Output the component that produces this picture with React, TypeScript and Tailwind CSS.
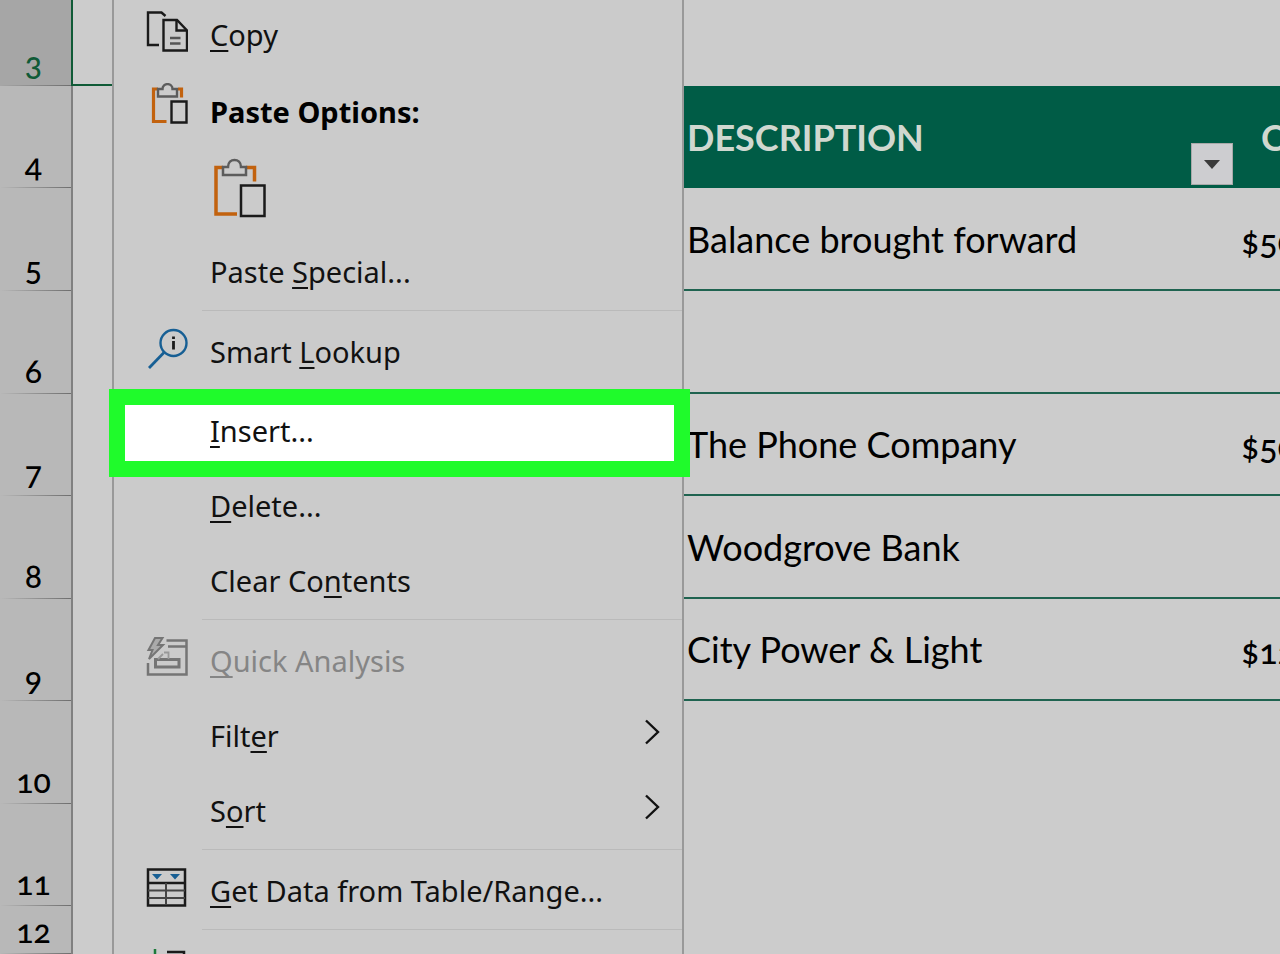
import React from "react";
import clsx from "clsx";

interface SheetRow {
  no: number;
  height: string;
  description?: string;
  amount?: string;
  line?: boolean;
}

const rows: SheetRow[] = [
  { no: 5, height: "h-[103px]", description: "Balance brought forward", amount: "$500.00", line: true },
  { no: 6, height: "h-[103px]", line: true },
  { no: 7, height: "h-[102px]", description: "The Phone Company", amount: "$500.00", line: true },
  { no: 8, height: "h-[103px]", description: "Woodgrove Bank", line: true },
  { no: 9, height: "h-[102px]", description: "City Power & Light", amount: "$125.00", line: true },
  { no: 10, height: "h-[103px]" },
  { no: 11, height: "h-[102px]" },
  { no: 12, height: "h-[48px]" },
  { no: 13, height: "h-[102px]" },
];

// ====== Icons ======
const CopyIcon = () => (
  <svg width="42" height="42" viewBox="0 0 42 42" fill="none" stroke="#1a1a1a" strokeWidth="2.400">
    <path d="M13 34H2V1.500H15.500L19.500 5" />
    <path d="M17.500 9H31L41 19.500V39.500H17.500Z" />
    <path d="M30.500 9V19.500H41" />
    <path d="M24 27H34.500M24 32.500H34.500" stroke="#555" />
  </svg>
);

const PasteIcon = () => (
  <svg width="42" height="42" viewBox="0 0 42 42" fill="none" strokeWidth="2.400">
    <path d="M20.500 38.500H7.500V6H12M32 6H35.500V14.500" stroke="#c2620e" strokeWidth="3.200" />
    <path d="M12 6H16.500C16.500 -0.500 26.500 -0.500 26.500 6H31V13.500H12Z" stroke="#5c5c5c" />
    <path d="M25.500 18.500H40.500V39.500H25.500Z" stroke="#1a1a1a" />
  </svg>
);

const PasteLargeIcon = () => (
  <svg width="54" height="60" viewBox="0 0 54 60" fill="none" strokeWidth="2.500">
    <path d="M24 56H3V9.500H10M33 9.500H41.500V23.500" stroke="#c2620e" strokeWidth="3.500" />
    <path d="M10 9H15C15 -0.500 28 -0.500 28 9H33V17H10Z" stroke="#5c5c5c" fill="#cbcbcb" />
    <path d="M28 27.500H51.500V58H28Z" stroke="#1a1a1a" />
  </svg>
);

const LookupIcon = () => (
  <svg width="42" height="42" viewBox="0 0 42 42" fill="none" stroke="#175f94" strokeWidth="2.400">
    <circle cx="27.500" cy="15" r="13" />
    <path d="M18 24.500L3 40" strokeWidth="2.800" />
    <path d="M27.500 13V21.500M27.500 8.500V11" stroke="#1a1a1a" strokeWidth="2.800" />
  </svg>
);

const QuickAnalysisIcon = () => (
  <svg width="42" height="42" viewBox="0 0 42 42" fill="none" stroke="#757575" strokeWidth="2.500">
    <path d="M20.500 3.500H40.500V37.500H2V26" />
    <path d="M22 9.500H40.500" />
    <path d="M9 1H16.500L12 8H17L3 22L6.500 13H2.500Z" strokeWidth="2" fill="#aaa" />
    <path d="M9.500 22.500H33V30H9.500Z" strokeWidth="3" />
    <path d="M18 15.500H22.500V22M12 22L17 17" stroke="#999" strokeWidth="1.800" />
  </svg>
);

const TableRangeIcon = () => (
  <svg width="42" height="42" viewBox="0 0 42 42" fill="none" stroke="#1a1a1a" strokeWidth="2">
    <path d="M2 2.500H39V38.500H2Z" strokeWidth="2.500" />
    <path d="M2 16H39" strokeWidth="2.500" />
    <path d="M20 16V38M2 23.500H39M2 31H39" stroke="#444" />
    <path d="M6 7H16L11 12.500ZM24 7H34L29 12.500Z" fill="#175f94" stroke="none" />
  </svg>
);

const NewCommentIcon = () => (
  <svg width="42" height="42" viewBox="0 0 42 42" fill="none" strokeWidth="2.500">
    <path d="M9 2V16M2 9H16" stroke="#1c7a3a" />
    <path d="M21 5H38V30H16L8 38V20" stroke="#1a1a1a" />
  </svg>
);

const SubmenuArrow = () => (
  <svg className="mr-[22px] mb-2 ml-auto" width="16" height="26" viewBox="0 0 16 26" fill="none" stroke="#111" strokeWidth="2.400">
    <path d="M2 1.500L14 13L2 24.500" />
  </svg>
);

// ====== Menu pieces ======
interface MenuItemProps {
  children?: React.ReactNode;
  icon?: React.ReactNode;
  height?: string;
  submenu?: boolean;
  disabled?: boolean;
  highlighted?: boolean;
}

const MenuItem = ({ children, icon, height = "h-[75px]", submenu, disabled, highlighted }: MenuItemProps) => (
  <button
    type="button"
    role="menuitem"
    disabled={disabled}
    className={clsx(
      "relative flex w-full shrink-0 items-center gap-[22px] pl-8 text-left text-[29px] leading-10 whitespace-nowrap",
      height,
      disabled ? "text-[#858585]" : "text-[#111]"
    )}
  >
    {highlighted && (
      <span className="absolute -top-[5px] -right-2 -bottom-[9px] -left-[5px] border-[16px] border-[#1ffb2b] bg-white" />
    )}
    <span className="relative w-[42px] shrink-0 pb-1.5">{icon}</span>
    <span className="relative">{children}</span>
    {submenu && <SubmenuArrow />}
  </button>
);

const Key = ({ children }: { children: string }) => (
  <span className="underline decoration-2 underline-offset-4 [text-decoration-skip-ink:none]">{children}</span>
);

const Separator = () => (
  <div role="separator" className="ml-[88px] h-[5px] shrink-0 pt-px">
    <div className="h-px bg-[#bababa]" />
  </div>
);

const ContextMenu = () => (
  <div
    role="menu"
    className="absolute top-0 left-[112px] flex w-[572px] flex-col border-x-2 border-[#999999] bg-[#cbcbcb] font-['Noto_Sans',sans-serif]"
  >
    <MenuItem icon={<CopyIcon />} height="h-[70px]">
      <Key>C</Key>opy
    </MenuItem>
    <div className="flex h-[80px] items-center gap-[22px] pt-1 pl-8 text-[29px] leading-10 font-bold text-black">
      <span className="w-[42px] pb-4">
        <PasteIcon />
      </span>
      Paste Options:
    </div>
    <div className="flex h-[84px] pt-2 pl-[99px]">
      <button type="button" aria-label="Paste" className="h-[60px]">
        <PasteLargeIcon />
      </button>
    </div>
    <MenuItem>
      Paste <Key>S</Key>pecial...
    </MenuItem>
    <Separator />
    <MenuItem icon={<LookupIcon />}>
      Smart <Key>L</Key>ookup
    </MenuItem>
    <Separator />
    <MenuItem highlighted height="h-[74px]">
      <Key>I</Key>nsert...
    </MenuItem>
    <MenuItem>
      <Key>D</Key>elete...
    </MenuItem>
    <MenuItem>
      Clear Co<Key>n</Key>tents
    </MenuItem>
    <Separator />
    <MenuItem icon={<QuickAnalysisIcon />} disabled>
      <Key>Q</Key>uick Analysis
    </MenuItem>
    <MenuItem submenu>
      Filt<Key>e</Key>r
    </MenuItem>
    <MenuItem submenu>
      S<Key>o</Key>rt
    </MenuItem>
    <Separator />
    <MenuItem icon={<TableRangeIcon />}>
      <Key>G</Key>et Data from Table/Range...
    </MenuItem>
    <Separator />
    <MenuItem icon={<NewCommentIcon />} />
  </div>
);

// ====== Sheet ======
const RowNumber = ({ no, selected }: { no: number; selected?: boolean }) => (
  <th
    scope="row"
    className={clsx(
      "border-r-2 p-0 text-center align-bottom text-[32px] leading-8 font-medium oldstyle-nums",
      selected ? "border-[#0f5a36] bg-[#a6a6a6] text-[#0f5a36]" : "border-[#808080] bg-[#b8b8b8] text-black"
    )}
  >
    <div className="pr-1 pb-1.5">{no}</div>
    <div className="h-px bg-linear-to-r from-transparent to-[#6e6e6e]" />
  </th>
);

const App: React.FC = () => {
  return (
    <div className="relative h-screen overflow-hidden bg-[#cccccc] font-[Lato,sans-serif] text-black">
      <table className="w-full table-fixed border-separate border-spacing-0">
        <colgroup>
          <col className="w-[73px]" />
          <col className="w-[610px]" />
          <col />
          <col className="w-[43px]" />
        </colgroup>
        <tbody>
          <tr className="h-[86px]">
            <RowNumber no={3} selected />
            <td className="border-b-2 border-[#0f5a36]" />
            <td />
            <td />
          </tr>
          <tr className="h-[102px]">
            <RowNumber no={4} />
            <td />
            <th scope="col" className="bg-[#005c46] p-0 text-left text-[36px] leading-10 font-bold text-[#d0d8d0]">
              <div className="flex h-[102px] items-center justify-between pr-1 pl-1">
                DESCRIPTION
                <button
                  type="button"
                  aria-label="Filter description"
                  className="mb-[3px] flex size-[42px] items-center justify-center self-end border border-[#a9a9a9] bg-[#cdcdd0]"
                >
                  <svg width="16" height="9" viewBox="0 0 16 9">
                    <path d="M0 0H16L8 9Z" fill="#3a3a3a" />
                  </svg>
                </button>
              </div>
            </th>
            <th scope="col" className="overflow-hidden bg-[#005c46] p-0 pl-6 text-left text-[36px] leading-10 font-bold text-[#d0d8d0]">
              CATEGORY
            </th>
          </tr>
          {rows.map((row) => (
            <tr key={row.no} className={row.height}>
              <RowNumber no={row.no} />
              <td />
              <td
                className={clsx(
                  "p-0 pl-1 text-[36px] leading-10 whitespace-nowrap",
                  row.line && "border-b-2 border-[#1f6350]"
                )}
              >
                {row.description}
              </td>
              <td
                className={clsx(
                  "overflow-hidden p-0 pt-1 pl-1 text-[34px] leading-10 font-medium whitespace-nowrap oldstyle-nums",
                  row.line && "border-b-2 border-[#1f6350]"
                )}
              >
                {row.amount}
              </td>
            </tr>
          ))}
        </tbody>
      </table>
      <ContextMenu />
    </div>
  );
};

export default App;
